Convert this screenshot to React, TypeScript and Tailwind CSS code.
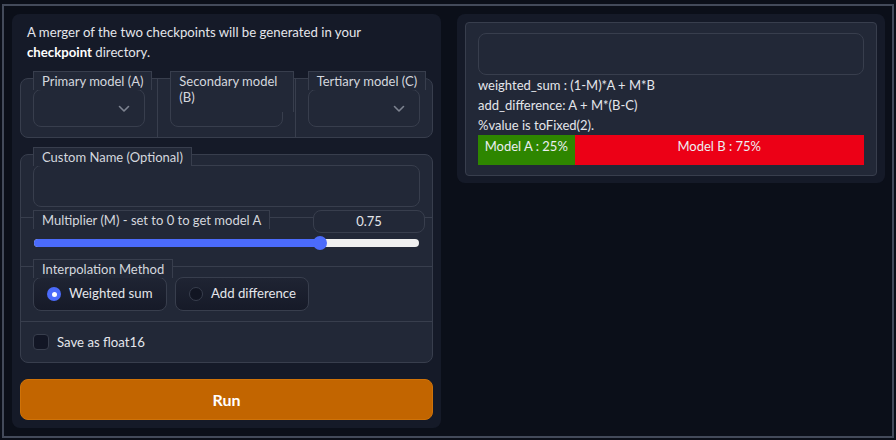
import React from "react";

const FONT = { fontFamily: "Lato, 'Noto Sans', sans-serif" };

function Chevron() {
  return (
    <svg width="12" height="8" viewBox="0 0 12 8" className="absolute right-[14px] top-[15px]">
      <polyline points="1.5,1.5 6,6 10.5,1.5" fill="none" stroke="#7d8390" strokeWidth="1.6" strokeLinecap="round" strokeLinejoin="round" />
    </svg>
  );
}

function FloatLabel({ children, className = "" }: { children: React.ReactNode; className?: string }) {
  return (
    <div
      className={
        "absolute top-[-8px] left-[12px] bg-[#222837] border-l border-t border-r border-[#383e4d] px-2 pt-[1px] text-[13px] leading-4 text-[#d4d7de] z-10 " +
        className
      }
    >
      {children}
    </div>
  );
}

function ModelCol({ label, labelClass }: { label: React.ReactNode; labelClass?: string }) {
  return (
    <div className="relative flex-1 px-3 pt-[10px] pb-[10px]">
      <FloatLabel className={"pb-[1px] " + (labelClass ?? "whitespace-nowrap")}>{label}</FloatLabel>
      <div className="relative h-[38px] rounded-lg border border-[#383e4d] bg-[#222837]">
        <Chevron />
      </div>
    </div>
  );
}

export default function App() {
  return (
    <div className="w-[896px] h-[440px] bg-[#0b0f19] pt-[4px] pl-[2px] overflow-hidden text-[#e4e6eb]" style={FONT}>
      <div className="w-[892px] h-[434px] border-2 border-[#434a5a] flex gap-4 pl-[8px] pt-[8px]">
        {/* Left panel */}
        <div className="w-[429px] h-[414px] rounded-lg bg-[#151a28] p-2 flex flex-col gap-4">
          <div className="px-[7px] text-[13.2px] leading-5 text-[#e4e6eb]">
            A merger of the two checkpoints will be generated in your <b className="font-bold text-white">checkpoint</b> directory.
          </div>

          {/* Model row */}
          <div className="flex rounded-lg border border-[#383e4d] bg-[#222837] divide-x divide-[#383e4d]">
            <ModelCol label="Primary model (A)" />
            <ModelCol
              label={
                <>
                  Secondary model
                  <br />
                  (B)
                </>
              }
              labelClass="w-[124px] pb-[7px]"
            />
            <ModelCol label="Tertiary model (C)" />
          </div>

          {/* Settings group */}
          <div className="flex flex-col rounded-lg border border-[#383e4d] bg-[#222837] divide-y divide-[#383e4d]">
            <div className="relative px-3 pt-[10px] pb-[10px]">
              <FloatLabel className="pb-[1px] whitespace-nowrap">Custom Name (Optional)</FloatLabel>
              <div className="h-[42px] rounded-lg border border-[#383e4d] bg-[#222837]" />
            </div>

            <div className="relative pt-[21px] pb-[19px]">
              <FloatLabel className="pb-[1px] whitespace-nowrap">Multiplier (M) - set to 0 to get model A</FloatLabel>
              <div className="absolute top-[-8px] right-[7px] w-[112px] h-[23px] rounded-lg border border-[#383e4d] bg-[#222837] flex items-center justify-center text-[13px] text-[#e4e6eb]">
                0.75
              </div>
              <div className="relative mx-[13px] h-[8px] rounded-full bg-[#efefef]">
                <div className="absolute left-0 top-0 h-[8px] rounded-full bg-[#4b6bfb]" style={{ width: "74.2%" }} />
                <div
                  className="absolute top-[-3px] w-[14px] h-[14px] rounded-full bg-[#4b6bfb] -translate-x-1/2"
                  style={{ left: "74.2%" }}
                />
              </div>
            </div>

            <div className="relative px-3 pt-[10px] pb-[10px]">
              <FloatLabel className="pb-[1px] whitespace-nowrap">Interpolation Method</FloatLabel>
              <div className="flex gap-2">
                <div className="w-[134px] h-[34px] rounded-lg border border-[#383e4d] bg-gradient-to-b from-[#1f2433] to-[#161a28] flex items-center pl-[13px] gap-2 text-[13.2px]">
                  <span className="w-[14px] h-[14px] rounded-full bg-[#4b6bfb] flex items-center justify-center">
                    <span className="w-[5px] h-[5px] rounded-full bg-white" />
                  </span>
                  <span>Weighted sum</span>
                </div>
                <div className="w-[134px] h-[34px] rounded-lg border border-[#383e4d] bg-gradient-to-b from-[#1f2433] to-[#161a28] flex items-center pl-[13px] gap-2 text-[13.2px]">
                  <span className="w-[14px] h-[14px] rounded-full border border-[#383e4d] bg-[#111522]" />
                  <span>Add difference</span>
                </div>
              </div>
            </div>

            <div className="px-3 pt-[12px] pb-[12px] flex items-center gap-2">
              <span className="w-[16px] h-[16px] rounded border border-[#383e4d] bg-[#121625]" />
              <span className="text-[13.2px] leading-4">Save as float16</span>
            </div>
          </div>

          <div className="h-[42px] rounded-lg bg-[#c26500] border border-[#cf7208] flex items-center justify-center text-[16px] font-bold text-white">
            Run
          </div>
        </div>

        {/* Right panel */}
        <div className="w-[428px] h-[169px] rounded-lg bg-[#151a28] pl-2 pr-2 pt-2">
          <div className="rounded-sm border border-[#383e4d] bg-[#222837] px-3 pt-[10px] pb-[10px]">
            <div className="h-[42px] rounded-lg border border-[#383e4d] bg-[#222837]" />
            <div className="text-[13px] leading-5 text-[#e4e6eb]">
              <div>weighted_sum : (1-M)*A + M*B</div>
              <div>add_difference: A + M*(B-C)</div>
              <div>%value is toFixed(2).</div>
            </div>
            <div className="flex h-[30px] text-[13px] leading-5 text-[#eceef2]">
              <div className="bg-[#2e8600] text-center pt-[1px]" style={{ width: "25%" }}>
                Model A : 25%
              </div>
              <div className="bg-[#ec0016] text-center pt-[1px]" style={{ width: "75%" }}>
                Model B : 75%
              </div>
            </div>
          </div>
        </div>
      </div>
    </div>
  );
}
